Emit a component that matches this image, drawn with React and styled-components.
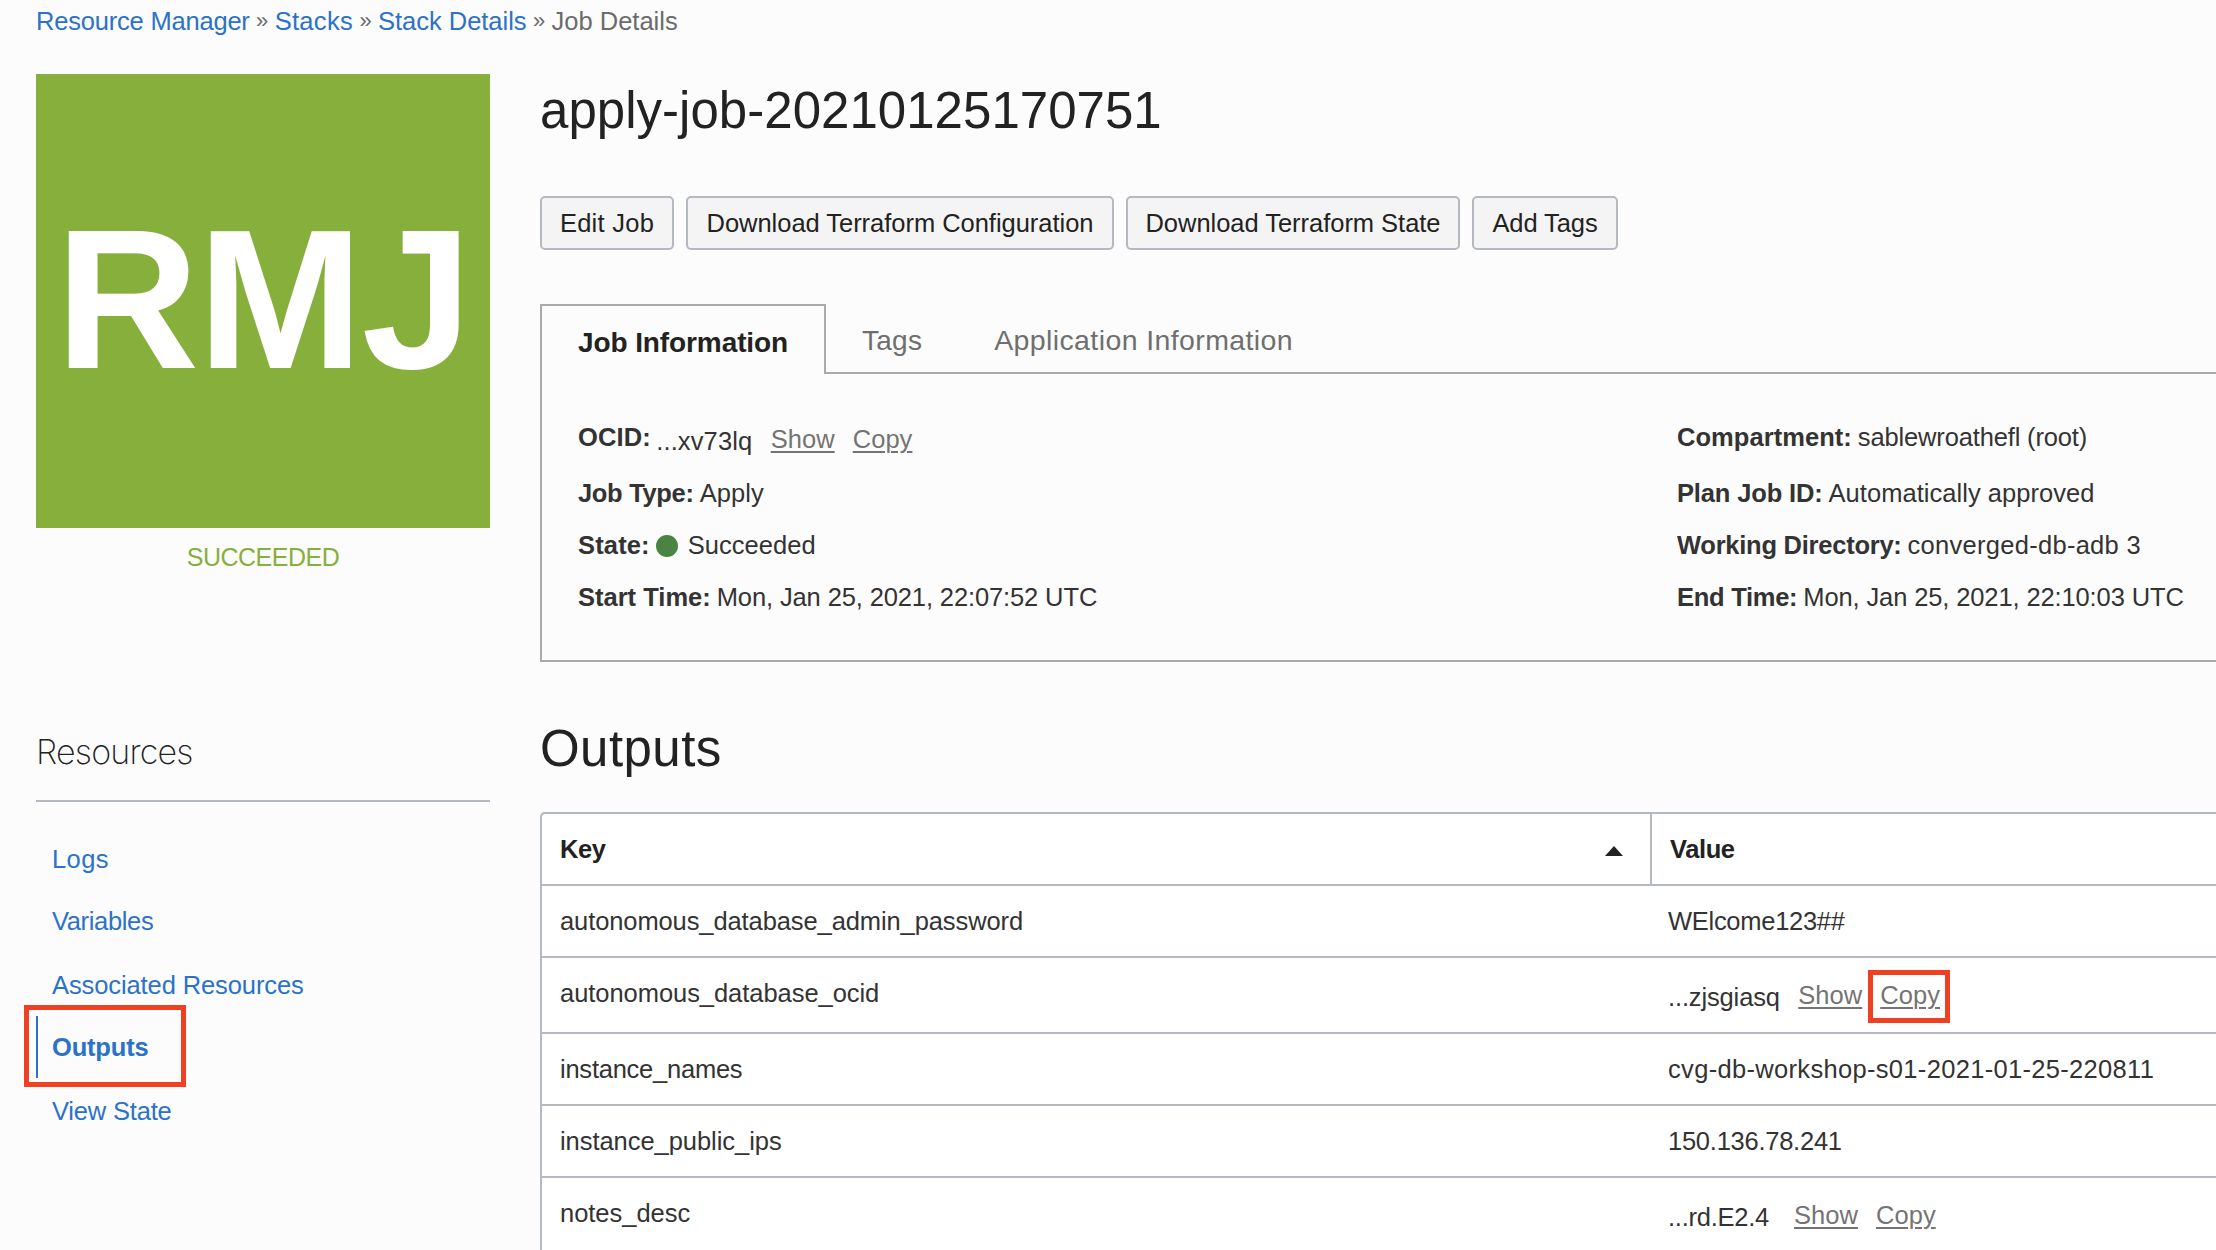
import React from "react";
import styled, { createGlobalStyle } from "styled-components";

const GlobalStyle = createGlobalStyle`
  *, *::before, *::after { box-sizing: border-box; }
  body {
    margin: 0;
    background: #fcfcfc;
    color: #333333;
    font-family: "Liberation Sans", Arial, sans-serif;
    font-size: 25.5px;
  }
`;

const tracked = ({ $ls = 0 }) => `letter-spacing: ${$ls}px;`;

const Page = styled.div`
  width: 2216px;
  height: 1250px;
  overflow: hidden;
  display: flex;
  flex-direction: column;
`;

const Breadcrumbs = styled.nav`
  display: flex;
  padding-left: 36px;
  line-height: 42px;
  white-space: nowrap;
  color: #6b6b6b;
`;

const Crumb = styled.span`
  color: ${({ $current }) => ($current ? "#6b6b6b" : "#2b72c8")};
  ${tracked}
`;

const CrumbSeparator = styled.span`
  width: 25px;
  text-align: center;
  font-size: 22px;
`;

const Main = styled.main`
  display: flex;
  gap: 50px;
  padding: 32px 0 0 36px;
`;

const Sidebar = styled.aside`
  flex: 0 0 454px;
  display: flex;
  flex-direction: column;
`;

const JobTile = styled.div`
  height: 454px;
  background: #86b03b;
  color: #ffffff;
  font-size: 199px;
  font-weight: 700;
  line-height: 450px;
  letter-spacing: -1.8px;
  text-align: center;
`;

const JobStatus = styled.div`
  line-height: 58px;
  text-align: center;
  font-size: 25px;
  color: #86b03b;
  ${tracked}
`;

const ResourcesTitle = styled.h2`
  margin: 140px 0 0;
  padding: 0 0 23px;
  border-bottom: 2px solid #b4b9bf;
  font-family: Inter, "Liberation Sans", sans-serif;
  font-size: 34px;
  font-weight: 200;
  line-height: 51px;
  color: #222222;
  ${tracked}
`;

const ResourceList = styled.ul`
  margin: 0;
  padding: 26px 0 0;
  list-style: none;
`;

const ResourceItem = styled.li`
  position: relative;
  height: 62px;
  padding-left: 14px;
  border-left: 2px solid ${({ $active }) => ($active ? "#2b72c8" : "transparent")};
  line-height: 62px;
  font-weight: ${({ $active }) => ($active ? 700 : 400)};
  color: #2b72c8;
  ${tracked}

  &:nth-child(even) { margin-bottom: 2px; }
`;

const Highlight = styled.span`
  position: absolute;
  top: ${({ $top }) => $top}px;
  left: ${({ $left }) => $left}px;
  width: ${({ $width }) => $width}px;
  height: ${({ $height }) => $height}px;
  border: 5px solid #ee4023;
`;

const Content = styled.section`
  flex: 1;
  min-width: 0;
  display: flex;
  flex-direction: column;
`;

const Heading = styled.h1`
  margin: 0;
  font-size: 51px;
  font-weight: 400;
  line-height: 73px;
  color: #222222;
  ${tracked}
`;

const Toolbar = styled.div`
  display: flex;
  gap: 12px;
  margin: 49px 0 54px;
`;

const Button = styled.button`
  width: ${({ $width }) => $width}px;
  height: 54px;
  padding: 0;
  border: 2px solid #b4b9bf;
  border-radius: 5px;
  background: #f4f4f4;
  color: #222222;
  font: inherit;
  line-height: 50px;
  white-space: nowrap;
  ${tracked}
`;

const TabBar = styled.div`
  display: flex;
  height: 70px;
  font-size: 28px;
  line-height: 37px;
`;

const ActiveTab = styled.div`
  width: 286px;
  padding: 18px 0 0 36px;
  border: solid #aaaaaa;
  border-width: 2px 2px 0;
  font-weight: 700;
  color: #222222;
  ${tracked}
`;

const InactiveTabs = styled.div`
  flex: 1;
  display: flex;
  border-bottom: 2px solid #aaaaaa;
`;

const Tab = styled.div`
  padding: 18px 36px 0;
  font-size: ${({ $size = 28 }) => $size}px;
  color: #6f6f6f;
  ${tracked}
`;

const InfoPanel = styled.div`
  display: grid;
  grid-template-columns: 1099px 1fr;
  height: 288px;
  padding: 37px 0 0 36px;
  border: solid #aaaaaa;
  border-width: 0 0 2px 2px;
  line-height: 52px;
  white-space: nowrap;
`;

const InfoColumn = styled.div`
  display: flex;
  flex-direction: column;
`;

const InfoRow = styled.div`
  display: flex;
  gap: ${({ $gap = 6 }) => $gap}px;
  height: ${({ $tall }) => ($tall ? 56 : 52)}px;
`;

const Label = styled.strong`
  font-weight: 700;
  ${tracked}
`;

const Text = styled.span`
  ${tracked}
`;

const StateDot = styled.span`
  width: 22px;
  height: 22px;
  margin: 16px 4px 0 0;
  border-radius: 50%;
  background: #4a8443;
`;

const MaskedValue = styled.span`
  display: flex;
  gap: 18px;
`;

const MaskedText = styled.span`
  margin-top: 4px;
  margin-right: ${({ $after = 0 }) => $after}px;
  ${tracked}
`;

const ActionLink = styled.a`
  position: relative;
  margin-top: 2px;
  color: #747474;
  letter-spacing: 0.05px;
  text-decoration: underline;
  text-decoration-thickness: 2px;
  text-underline-offset: 3px;
`;

const SectionHeading = styled(Heading).attrs({ as: "h2" })`
  margin: 50px 0 27px;
`;

const Table = styled.div`
  border: solid #b4b9bf;
  border-width: 2px 0 0 2px;
  border-top-left-radius: 5px;
  background: #ffffff;
  line-height: 70px;
  white-space: nowrap;
`;

const TableRow = styled.div`
  display: grid;
  grid-template-columns: 1108px 1fr;
  height: ${({ $tall }) => ($tall ? 76 : 72)}px;
  border-bottom: 2px solid #b4b9bf;
`;

const Cell = styled.div`
  padding-left: 18px;
  ${tracked}
`;

const HeaderCell = styled(Cell)`
  display: flex;
  align-items: center;
  justify-content: space-between;
  padding-right: 27px;
  border-left: ${({ $divided }) => ($divided ? "2px solid #b4b9bf" : "0")};
  font-weight: 700;
  color: #222222;
`;

const SortArrow = styled.span`
  margin-top: 4px;
  border: solid transparent;
  border-width: 0 9px 10px;
  border-bottom-color: #222222;
`;

const crumbs = [
  { text: "Resource Manager", ls: -0.2 },
  { text: "Stacks", ls: 0.3 },
  { text: "Stack Details", ls: -0.02 },
  { text: "Job Details", ls: 0, current: true },
];

const resources = [
  { text: "Logs", ls: 0.4 },
  { text: "Variables", ls: -0.34 },
  { text: "Associated Resources", ls: -0.1 },
  { text: "Outputs", ls: -0.18, active: true },
  { text: "View State", ls: -0.19 },
];

const actions = [
  { text: "Edit Job", width: 134, ls: 0.25 },
  { text: "Download Terraform Configuration", width: 428, ls: -0.03 },
  { text: "Download Terraform State", width: 334, ls: -0.03 },
  { text: "Add Tags", width: 146, ls: -0.08 },
];

const jobInfo = [
  [
    { label: "OCID:", ls: 0.1, masked: "...xv73lq", valueLs: 0.12, tall: true, gap: 5.5 },
    { label: "Job Type:", ls: -0.32, value: "Apply", valueLs: 0.05 },
    { label: "State:", ls: 0.15, value: "Succeeded", valueLs: 0.04, dot: true },
    { label: "Start Time:", ls: 0, value: "Mon, Jan 25, 2021, 22:07:52 UTC", valueLs: -0.12 },
  ],
  [
    { label: "Compartment:", ls: 0.05, value: "sablewroathefl (root)", valueLs: -0.15, tall: true },
    { label: "Plan Job ID:", ls: -0.15, value: "Automatically approved", valueLs: 0.04 },
    { label: "Working Directory:", ls: -0.25, value: "converged-db-adb 3", valueLs: 0.28 },
    { label: "End Time:", ls: -0.28, value: "Mon, Jan 25, 2021, 22:10:03 UTC", valueLs: -0.12 },
  ],
];

const outputs = [
  { key: "autonomous_database_admin_password", ls: -0.1, value: "WElcome123##", valueLs: -0.28 },
  { key: "autonomous_database_ocid", ls: -0.05, masked: "...zjsgiasq", valueLs: -0.14, tall: true, highlight: true },
  { key: "instance_names", ls: -0.24, value: "cvg-db-workshop-s01-2021-01-25-220811", valueLs: 0.32 },
  { key: "instance_public_ips", ls: -0.05, value: "150.136.78.241", valueLs: -0.25 },
  { key: "notes_desc", ls: -0.03, masked: "...rd.E2.4", valueLs: -0.25, tall: true, after: 7 },
];

function Masked({ text, ls, after = 0.4, highlight }) {
  return (
    <MaskedValue>
      <MaskedText $ls={ls} $after={after}>{text}</MaskedText>
      <ActionLink>Show</ActionLink>
      <ActionLink>
        Copy
        {highlight && <Highlight $top={10} $left={-12} $width={82} $height={53} />}
      </ActionLink>
    </MaskedValue>
  );
}

export default function App() {
  return (
    <Page>
      <GlobalStyle />
      <Breadcrumbs>
        {crumbs.map((crumb, index) => (
          <React.Fragment key={crumb.text}>
            {index > 0 && <CrumbSeparator>»</CrumbSeparator>}
            <Crumb $ls={crumb.ls} $current={crumb.current}>{crumb.text}</Crumb>
          </React.Fragment>
        ))}
      </Breadcrumbs>
      <Main>
        <Sidebar>
          <JobTile>RMJ</JobTile>
          <JobStatus $ls={-0.5}>SUCCEEDED</JobStatus>
          <ResourcesTitle $ls={-0.8}>Resources</ResourcesTitle>
          <ResourceList>
            {resources.map((item) => (
              <ResourceItem key={item.text} $ls={item.ls} $active={item.active}>
                {item.text}
                {item.active && <Highlight $top={-11} $left={-14} $width={162} $height={82} />}
              </ResourceItem>
            ))}
          </ResourceList>
        </Sidebar>
        <Content>
          <Heading $ls={0.03}>apply-job-20210125170751</Heading>
          <Toolbar>
            {actions.map((action) => (
              <Button key={action.text} $width={action.width} $ls={action.ls}>{action.text}</Button>
            ))}
          </Toolbar>
          <TabBar>
            <ActiveTab $ls={-0.1}>Job Information</ActiveTab>
            <InactiveTabs>
              <Tab $ls={0.25}>Tags</Tab>
              <Tab $size={28.5} $ls={0.39}>Application Information</Tab>
            </InactiveTabs>
          </TabBar>
          <InfoPanel>
            {jobInfo.map((column, index) => (
              <InfoColumn key={index}>
                {column.map((row) => (
                  <InfoRow key={row.label} $tall={row.tall} $gap={row.gap}>
                    <Label $ls={row.ls}>{row.label}</Label>
                    {row.dot && <StateDot />}
                    {row.masked ? (
                      <Masked text={row.masked} ls={row.valueLs} />
                    ) : (
                      <Text $ls={row.valueLs}>{row.value}</Text>
                    )}
                  </InfoRow>
                ))}
              </InfoColumn>
            ))}
          </InfoPanel>
          <SectionHeading $ls={0.45}>Outputs</SectionHeading>
          <Table>
            <TableRow>
              <HeaderCell $ls={-0.4}>Key<SortArrow /></HeaderCell>
              <HeaderCell $ls={-0.4} $divided>Value</HeaderCell>
            </TableRow>
            {outputs.map((row) => (
              <TableRow key={row.key} $tall={row.tall}>
                <Cell $ls={row.ls}>{row.key}</Cell>
                <Cell $ls={row.masked ? 0 : row.valueLs}>
                  {row.masked ? (
                    <Masked text={row.masked} ls={row.valueLs} after={row.after} highlight={row.highlight} />
                  ) : (
                    row.value
                  )}
                </Cell>
              </TableRow>
            ))}
          </Table>
        </Content>
      </Main>
    </Page>
  );
}
